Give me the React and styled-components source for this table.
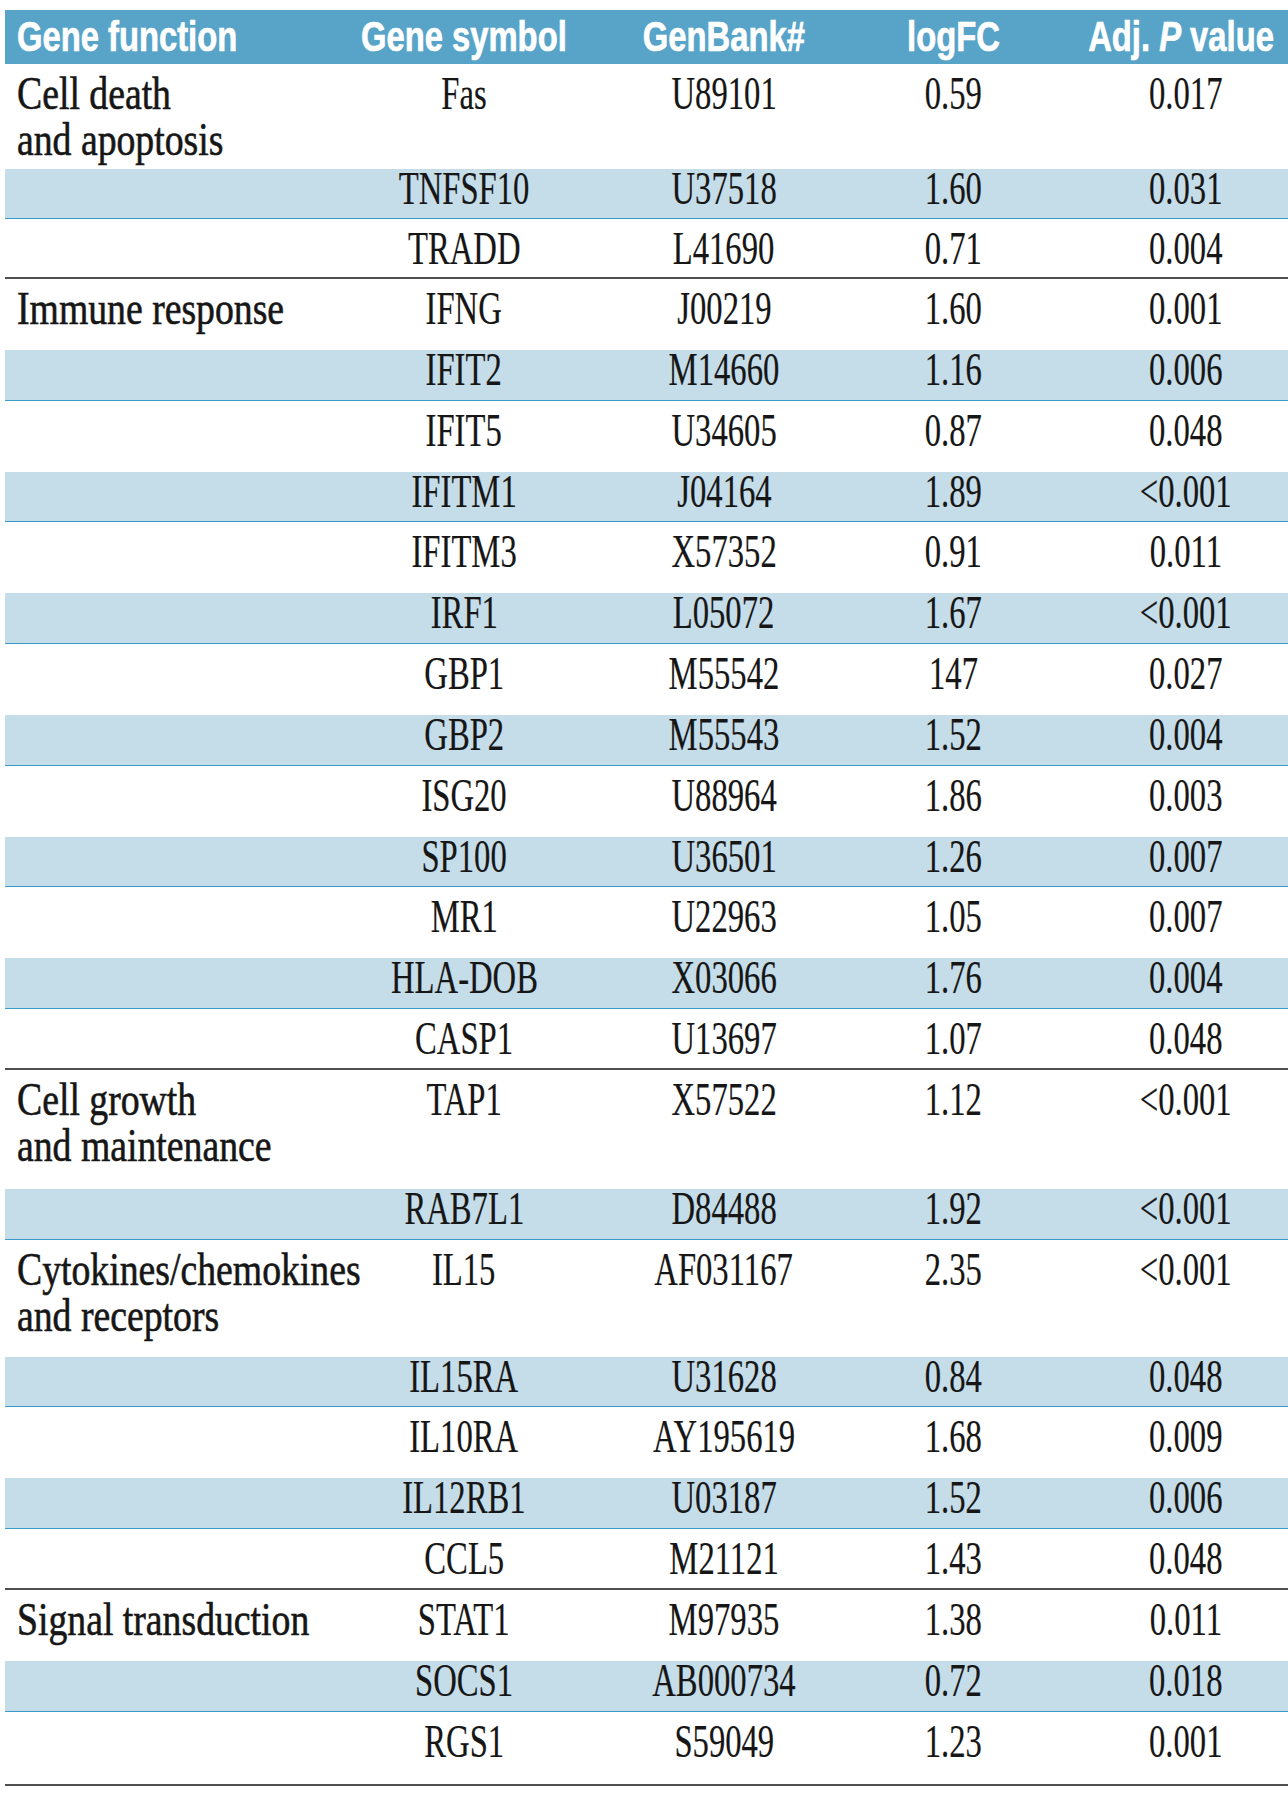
import React from "react";
import styled, { createGlobalStyle } from "styled-components";

const GlobalStyle = createGlobalStyle`
  html, body {
    margin: 0;
    padding: 0;
    background: #ffffff;
    overflow: hidden;
  }
`;

const Page = styled.div`
  padding: 10px 0 0 5px;
  width: 1288px;
  box-sizing: border-box;
`;

const COLUMNS = "355px 208px 312px 146px 1fr";

const HeaderRow = styled.div`
  display: grid;
  grid-template-columns: ${COLUMNS};
  height: 54px;
  align-items: center;
  background: #58a4c8;
`;

const HeadCell = styled.div`
  display: flex;
  justify-content: ${(p) => (p.$left ? "flex-start" : "center")};
  padding-left: ${(p) => p.$pad || 0}px;
  white-space: nowrap;
`;

const HeadText = styled.span`
  display: inline-block;
  font-family: "Liberation Sans", Arial, sans-serif;
  font-weight: 700;
  font-size: 42px;
  line-height: 54px;
  color: #ffffff;
  -webkit-text-stroke: 0.7px #ffffff;
  transform: scaleX(0.78);
  transform-origin: ${(p) => (p.$left ? "left center" : "center")};
  em {
    font-style: italic;
  }
`;

const Row = styled.div`
  display: grid;
  grid-template-columns: ${COLUMNS};
  box-sizing: border-box;
  height: ${(p) => p.$h}px;
  background: ${(p) =>
    p.$shaded
      ? "linear-gradient(to bottom, transparent 10px, #c5dce9 10px)"
      : "transparent"};
  border-bottom: ${(p) =>
    p.$last
      ? "2px solid #4f4f4f"
      : p.$shaded
      ? "1px solid #3a9bc8"
      : "none"};
`;

const Cell = styled.div`
  display: flex;
  justify-content: ${(p) => (p.$left ? "flex-start" : "center")};
  padding-top: 7px;
  padding-left: ${(p) => p.$pad || 0}px;
  white-space: nowrap;
`;

const CellText = styled.span`
  display: inline-block;
  font-family: "Liberation Serif", "Times New Roman", serif;
  font-size: 46px;
  line-height: 46px;
  color: #161616;
  transform: scaleX(${(p) => (p.$left ? 0.82 : 0.71)});
  transform-origin: ${(p) => (p.$left ? "left top" : "center top")};
  -webkit-text-stroke: ${(p) => (p.$left ? "0.6px #161616" : "0.2px #161616")};
`;

const groups = [
  {
    name: ["Cell death", "and apoptosis"],
    rows: [
      ["Fas", "U89101", "0.59", "0.017", 95],
      ["TNFSF10", "U37518", "1.60", "0.031", 60],
      ["TRADD", "L41690", "0.71", "0.004", 60],
    ],
  },
  {
    name: ["Immune response"],
    rows: [
      ["IFNG", "J00219", "1.60", "0.001"],
      ["IFIT2", "M14660", "1.16", "0.006"],
      ["IFIT5", "U34605", "0.87", "0.048"],
      ["IFITM1", "J04164", "1.89", "<0.001"],
      ["IFITM3", "X57352", "0.91", "0.011"],
      ["IRF1", "L05072", "1.67", "<0.001"],
      ["GBP1", "M55542", "147", "0.027"],
      ["GBP2", "M55543", "1.52", "0.004"],
      ["ISG20", "U88964", "1.86", "0.003"],
      ["SP100", "U36501", "1.26", "0.007"],
      ["MR1", "U22963", "1.05", "0.007"],
      ["HLA-DOB", "X03066", "1.76", "0.004"],
      ["CASP1", "U13697", "1.07", "0.048"],
    ].map((r) => [...r, 60.85]),
  },
  {
    name: ["Cell growth", "and maintenance"],
    rows: [
      ["TAP1", "X57522", "1.12", "<0.001", 109],
      ["RAB7L1", "D84488", "1.92", "<0.001", 61],
    ],
  },
  {
    name: ["Cytokines/chemokines", "and receptors"],
    rows: [
      ["IL15", "AF031167", "2.35", "<0.001", 107],
      ["IL15RA", "U31628", "0.84", "0.048", 60],
      ["IL10RA", "AY195619", "1.68", "0.009", 61],
      ["IL12RB1", "U03187", "1.52", "0.006", 61],
      ["CCL5", "M21121", "1.43", "0.048", 61],
    ],
  },
  {
    name: ["Signal transduction"],
    rows: [
      ["STAT1", "M97935", "1.38", "0.011", 61],
      ["SOCS1", "AB000734", "0.72", "0.018", 61],
      ["RGS1", "S59049", "1.23", "0.001", 74],
    ],
  },
];

const App = () => (
  <Page>
    <GlobalStyle />
    <HeaderRow>
      <HeadCell $left $pad={12}>
        <HeadText $left>Gene function</HeadText>
      </HeadCell>
      <HeadCell>
        <HeadText>Gene symbol</HeadText>
      </HeadCell>
      <HeadCell>
        <HeadText>GenBank#</HeadText>
      </HeadCell>
      <HeadCell>
        <HeadText>logFC</HeadText>
      </HeadCell>
      <HeadCell $pad={36}>
        <HeadText>
          Adj. <em>P</em> value
        </HeadText>
      </HeadCell>
    </HeaderRow>
    {groups.map((g) =>
      g.rows.map(([symbol, genbank, logfc, pval, h], i) => (
        <Row
          key={symbol}
          $h={h}
          $shaded={i % 2 === 1}
          $last={i === g.rows.length - 1 && i % 2 === 0}
        >
          <Cell $left $pad={12}>
            {i === 0 && (
              <CellText $left>
                {g.name.map((line, k) => (
                  <React.Fragment key={k}>
                    {k > 0 && <br />}
                    {line}
                  </React.Fragment>
                ))}
              </CellText>
            )}
          </Cell>
          <Cell>
            <CellText>{symbol}</CellText>
          </Cell>
          <Cell>
            <CellText>{genbank}</CellText>
          </Cell>
          <Cell>
            <CellText>{logfc}</CellText>
          </Cell>
          <Cell $pad={58}>
            <CellText>{pval}</CellText>
          </Cell>
        </Row>
      ))
    )}
  </Page>
);

export default App;
